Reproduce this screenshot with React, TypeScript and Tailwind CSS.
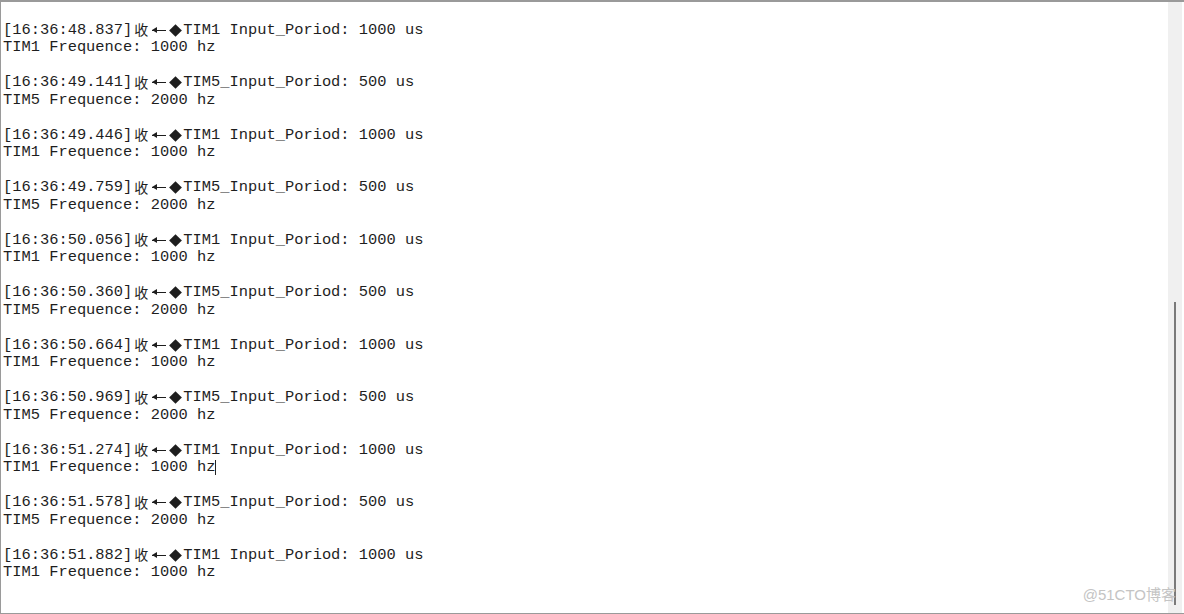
import React from 'react'

interface LogEntry {
  time: string
  timer: 'TIM1' | 'TIM5'
}

const entries: LogEntry[] = [
  { time: '16:36:48.837', timer: 'TIM1' },
  { time: '16:36:49.141', timer: 'TIM5' },
  { time: '16:36:49.446', timer: 'TIM1' },
  { time: '16:36:49.759', timer: 'TIM5' },
  { time: '16:36:50.056', timer: 'TIM1' },
  { time: '16:36:50.360', timer: 'TIM5' },
  { time: '16:36:50.664', timer: 'TIM1' },
  { time: '16:36:50.969', timer: 'TIM5' },
  { time: '16:36:51.274', timer: 'TIM1' },
  { time: '16:36:51.578', timer: 'TIM5' },
  { time: '16:36:51.882', timer: 'TIM1' },
]

const LogBlock = ({ entry, caret }: { entry: LogEntry; caret?: boolean }) => {
  const isTim1 = entry.timer === 'TIM1'
  return (
    <div className="mb-[17.5px]">
      <div className="h-[17.5px] flex items-center whitespace-pre">
        <span>[{entry.time}]</span>
        <span className="w-[51px] h-[17.5px] flex items-center font-['Noto_Sans_CJK_SC',sans-serif] text-[14px] leading-none">
          <span className="w-[18px] pl-[2px] -mt-[2px]">收</span>
          <span className="w-[17px] flex justify-center">
            <span className="block w-[14px] h-px bg-[#1e1e1e] relative">
              <span className="absolute left-0 top-[-3px] w-0 h-0 border-y-[3.5px] border-y-transparent border-r-[5px] border-r-[#1e1e1e]" />
            </span>
          </span>
          <span className="w-[16px] flex justify-center">
            <span className="block w-[9px] h-[9px] bg-[#1e1e1e] rotate-45" />
          </span>
        </span>
        <span>{isTim1 ? 'TIM1 Input_Poriod: 1000 us' : 'TIM5_Input_Poriod: 500 us'}</span>
      </div>
      <div className="h-[17.5px] flex items-center whitespace-pre">
        <span>{isTim1 ? 'TIM1 Frequence: 1000 hz' : 'TIM5 Frequence: 2000 hz'}</span>
        {caret && <span className="w-px h-[15px] bg-[#222]" />}
      </div>
    </div>
  )
}

export default function App() {
  return (
    <div className="relative w-[1184px] h-[614px] bg-white border-t-2 border-l border-b border-[#9a9a9a] flex overflow-hidden">
      {/* Log text area */}
      <div className="flex-1 pt-[19.5px] pl-[2px] font-['Liberation_Mono',monospace] text-[15.4px] leading-[17.5px] text-[#1e1e1e]">
        {entries.map((e, i) => (
          <LogBlock key={e.time} entry={e} caret={i === 8} />
        ))}
      </div>

      {/* Vertical scrollbar */}
      <div className="w-[16px] bg-[#f0f0f0] border-r-2 border-white flex flex-col">
        <div className="h-[300px]" />
        <div className="h-[303px] flex">
          <div className="w-[6px]" />
          <div className="w-[2px] bg-[#7a7a7a]" />
        </div>
      </div>

      {/* Watermark */}
      <div className="absolute right-[8px] bottom-[7px] font-['Liberation_Sans','Noto_Sans_CJK_SC',sans-serif] text-[15px] text-[#c4c4c4]">
        @51CTO博客
      </div>
    </div>
  )
}
